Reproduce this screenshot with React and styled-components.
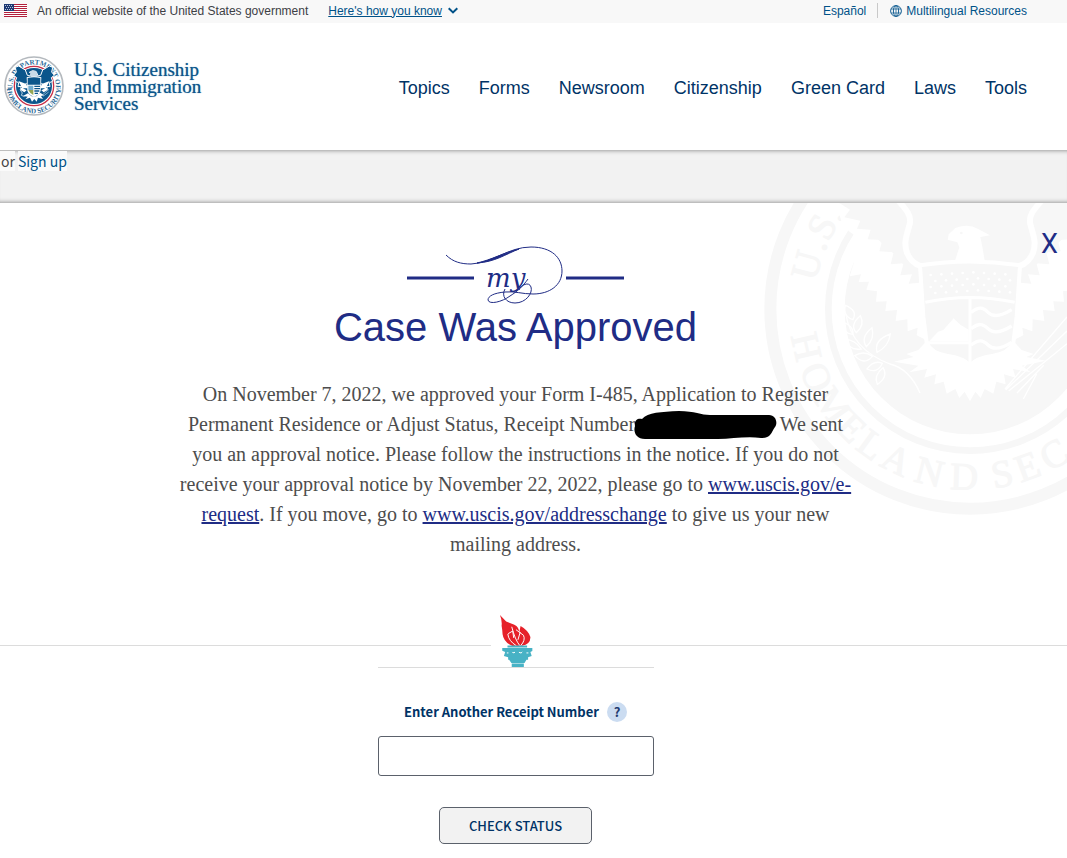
import styled, { createGlobalStyle } from "styled-components";

const navItems = [
  "Topics",
  "Forms",
  "Newsroom",
  "Citizenship",
  "Green Card",
  "Laws",
  "Tools",
];

// letters of the large seal, with their place on the ring in degrees
const topLetters = [
  ["U", -75],
  [".", -67],
  ["S", -61],
  [".", -55],
];

const bottomLetters = [
  ["H", 77],
  ["O", 66],
  ["M", 55],
  ["E", 45],
  ["L", 36],
  ["A", 26],
  ["N", 14],
  ["D", 2],
  ["S", -11],
  ["E", -20],
  ["C", -30],
];

const FlagIcon = () => (
  <svg width="23" height="13" viewBox="0 0 23 13" aria-hidden="true">
    <rect width="23" height="13" fill="#fff" />
    {[0, 2, 4, 6, 8, 10, 12].map((y) => (
      <rect key={y} y={y} width="23" height="1" fill="#b3203c" />
    ))}
    <rect width="10" height="7" fill="#1e3a73" />
    {[1, 3, 5].map((y) =>
      [1, 3, 5, 7].map((x) => (
        <rect key={`${x}-${y}`} x={x + (y === 3 ? 1 : 0)} y={y} width="1" height="1" fill="#b9c4da" />
      ))
    )}
  </svg>
);

const ChevronIcon = () => (
  <svg width="10" height="7" viewBox="0 0 10 7" aria-hidden="true">
    <path d="M.7 1.2 5 5.4 9.3 1.2" fill="none" stroke="#005288" strokeWidth="2" />
  </svg>
);

const GlobeIcon = () => (
  <svg width="12" height="12" viewBox="0 0 12 12" fill="none" stroke="#1a6396" aria-hidden="true">
    <circle cx="6" cy="6" r="5.4" />
    <ellipse cx="6" cy="6" rx="2.6" ry="5.4" />
    <path d="M1 4h10M1 8h10M6 .6v10.8" strokeWidth=".8" />
  </svg>
);

const DepartmentSeal = () => (
  <svg width="60" height="60" viewBox="0 0 180 180" aria-hidden="true">
    <defs>
      <path id="seal-top" d="M90 155A65 65 0 1 1 91 155" />
      <path id="seal-bottom" d="M8 90A82 82 0 0 0 172 90" />
    </defs>
    <circle cx="90" cy="90" r="87" fill="#fff" stroke="#b4b9be" strokeWidth="5" />
    <circle cx="90" cy="90" r="59" fill="#fff" stroke="#c8334a" strokeWidth="4" />
    <circle cx="90" cy="90" r="54" fill="#0b568c" />
    <g fill="#2b6a98" fontFamily="'Liberation Serif', serif" fontSize="21" fontWeight="700">
      <text>
        <textPath href="#seal-top" startOffset="50%" textAnchor="middle">
          U.S. DEPARTMENT OF
        </textPath>
      </text>
      <text>
        <textPath href="#seal-bottom" startOffset="50%" textAnchor="middle">
          HOMELAND SECURITY
        </textPath>
      </text>
    </g>
    <path
      d="M34 34 44 30 64 42 70 58 78 60 82 52 76 49 86 44 97 47 102 60 110 58 116 42 136 30 146 34 143 48 151 58 142 65 146 76 136 80 138 92 126 91 112 82 68 82 54 91 42 92 44 80 34 76 38 65 29 58 37 48Z"
      fill="#0b568c"
      stroke="#fff"
      strokeWidth="3"
    />
    <path d="m43 75 24 9 4 13-16 0ZM137 75l-24 9-4 13 16 0ZM49 93l19 10-7 6-12-7ZM131 93l-19 10 7 6 12-7Z" fill="#fff" />
    <path d="M80 62l1-8-6-5 8-5h12l4 8 2 10Z" fill="#c9dbe8" />
    <path d="M68 64q22-7 44 0l-2 40q-4 13-20 18-16-5-20-18Z" fill="#fff" />
    <path d="M71 66q19-5 38 0v20H71Z" fill="#0b568c" />
    <path d="M73 89h15v13H73Z" fill="#70acd0" />
    <path d="M73 102h15v15q-10-4-15-15Z" fill="#94a653" />
    <path d="M91 91h17M91 98h17M91 105h15M92 112h10" stroke="#0b568c" strokeWidth="4" />
    <path d="m72 112-15 8 14 2-7 8 14-5 6 12 7-8 7 8 4-12 15 4-6-9 10-2-13-8-11 11H83Z" fill="#fff" />
    <path d="m48 101 7 10-3 7 10 4" fill="none" stroke="#b6d0e0" strokeWidth="3" />
    <path d="m115 117 20-17m-18 21 17-13" stroke="#b6d0e0" strokeWidth="2" />
  </svg>
);

const wingInner =
  "M238 24H414C438 44 455 62 451 88C444 117 432 140 441 169C449 194 463 207 480 216V263L446 266 456 238 421 241 431 205 392 208 401 172 358 169 367 135 323 133 332 104 291 101 301 77 253 67 270 44Z";
const wingFeathers =
  "M236 48 258 64 294 96 331 111 360 139 399 174 429 207 467 245 488 275 500 436 470 421 473 398 443 409 442 373 407 378 411 345 376 348 380 319 348 320 351 289 319 284 327 260 296 261 303 238 269 244 281 205 261 172 286 115 246 87Z";

const SealWing = () => (
  <>
    <path d={wingFeathers} fill="#fff" />
    <path d={wingInner} />
    <path
      d="M415 17C440 45 455 62 449 88C440 121 430 143 441 173C449 194 463 207 482 213"
      fill="none"
      stroke="#fff"
      strokeWidth="18"
    />
  </>
);

const WatermarkSeal = () => (
  <Watermark viewBox="12 24 909 936" aria-hidden="true">
    <g fill="#f7f7f7">
      <circle cx="630" cy="342" r="599" fill="none" stroke="#f7f7f7" strokeWidth="36" />
      <circle cx="630" cy="342" r="425" fill="none" stroke="#f7f7f7" strokeWidth="20" />
      <circle cx="630" cy="342" r="376" />
      <path d="M195 24H350L290 125Q220 80 195 24Z" fill="#fff" />
      <g
        stroke="#f7f7f7"
        strokeWidth="3"
        fontFamily="'Liberation Serif', serif"
        fontSize="116"
        textAnchor="middle"
      >
        {topLetters.map(([letter, angle]) => (
          <text key={angle} x="630" y="-127" transform={`rotate(${angle} 630 342)`}>
            {letter}
          </text>
        ))}
        {bottomLetters.map(([letter, angle]) => (
          <text key={angle} x="630" y="884" transform={`rotate(${angle} 630 342)`}>
            {letter}
          </text>
        ))}
      </g>
      <SealWing />
      <g transform="matrix(-1 0 0 1 1260 0)">
        <SealWing />
      </g>
      <path
        d="M500 438 475 465 439 477 461 486 402 500 475 512 448 532 501 522 493 548 528 538 523 568 551 560 560 596 586 582 598 609 614 590 630 619 646 590 662 609 674 582 700 596 709 560 737 568 732 538 767 548 759 522 812 532 785 512 858 497 799 486 821 477 785 465 760 438Z"
        fill="#fff"
      />
      <path
        d="M480 211Q630 188 780 211L770 365 760 443Q748 474 700 482 650 489 630 511 610 489 560 482 512 474 500 443L490 365Z"
        stroke="#fff"
        strokeWidth="12"
      />
      <path d="M496 322Q630 293 764 322M630 309V506M500 443H630" fill="none" stroke="#fff" strokeWidth="9" />
      <path d="m508 438 26-28 16-5 31-35 20 19 25 15v35Z" fill="#fff" />
      <path
        d="M633 352c24-17 35-16 51 0s42 10 71-8M633 401c24-17 35-16 51 0s42 10 71-8M633 450c24-17 35-16 51 0s42 10 71-8"
        fill="none"
        stroke="#fff"
        strokeWidth="10"
      />
      <path
        d="M585 197 598 157 592 142 563 134 566 118 586 99Q625 85 653 101L690 121 661 126 667 155 674 197Z"
        fill="#fff"
      />
      <circle cx="604" cy="114" r="4" />
      {[0, 1, 2, 3].map((row) =>
        [0, 1, 2, 3, 4, 5, 6, 7].map((col) => (
          <circle
            key={`${row}-${col}`}
            cx={512 + col * 32 + (row % 2) * 14}
            cy={232 + row * 18 + Math.abs(col - 4) * 2}
            r="4"
            fill="#fff"
          />
        ))
      )}
      <g fill="none" stroke="#fff" strokeWidth="4">
        <path d="M258 360Q276 464 390 507Q448 521 480 594" />
        <path d="M256 331q38 15 23 43-31-10-23-43ZM301 362q15 28-12 51-21-23 12-51ZM246 382q34 7 33 36-34-3-33-36ZM336 398q9 35-17 57-19-28 17-57ZM391 417q-5 38-40 55-10-37 40-55ZM256 434q29 0 48 28-38 5-48-28ZM284 482q27-17 53 2-24 29-53-2ZM321 522q21-28 46-17-14 32-46 17ZM352 568q-12-27 17-50 17 28-17 50Z" />
        <path d="M735 582 921 366M737 585l184-177M746 588 921 446M790 612l40-75M771 594l80-83" />
      </g>
    </g>
  </Watermark>
);

const MyFlourish = () => (
  <svg width="218" height="59" viewBox="0 0 218 59" fill="none" stroke="#202c85" role="img" aria-label="my">
    <path d="M0 33H67M159 33H217" strokeWidth="3" />
    <path d="M39 10C46 17 54 19 64 19C86 18 101 2 124 2C145 2 155 13 155 26C155 40 143 49 126 49C115 49 108 46 98 47C87 48 81 51 81 55C82 60 95 57 103 51C111 46 116 41 121 34" />
    <path d="M70 18C84 15 96 8 112 4C99 9 88 17 70 18Z" fill="#202c85" />
    <path d="M98 44C94 51 99 58 108 58C119 58 126 48 124 42C122 36 114 40 112 45" />
    <text x="79" y="42" fill="#202c85" stroke="none" fontFamily="'DejaVu Serif', serif" fontStyle="italic" fontSize="26">
      my
    </text>
  </svg>
);

const TorchIcon = () => (
  <svg width="35" height="52" viewBox="0 0 105 159" aria-hidden="true">
    <path d="M5 0 24 20 49 30Q66 38 63 58L68 34Q90 46 98 67 99 89 72 94L43 95Q16 83 13 59 12 43 10 33 12 17 5 0Z" fill="#e62129" />
    <path d="M29 58Q31 79 55 94M41 36Q51 76 66 94M54 45 77 62Q84 77 68 94M30 57 44 49 47 70M67 52 60 76" fill="none" stroke="#fff" strokeWidth="3" />
    <path d="M28 93H88V99H28ZM12 101H104V110L98 113 102 125 91 129V137H30V129L17 125 21 113 12 109ZM33 137H86L80 147H40ZM41 148H78V159H41Z" fill="#47b2c5" />
    <path d="M26 116h5M43 113q0 5 8 1M63 114q8 5 10-1M86 116h6" stroke="#fff" strokeWidth="3" fill="none" />
  </svg>
);

const RedactedNumber = () => (
  <Redaction viewBox="0 0 144 28" aria-hidden="true">
    <path d="M8 8C14 1 27 1 45 0C61 0 67 4 76 4H135C142 4 144 12 141 16C137 22 137 27 127 27C112 25 98 28 84 28H11C2 28-1 21 1 15C0 10 3 7 8 8Z" />
  </Redaction>
);

const App = () => {
  return (
    <Page>
      <GlobalStyle />
      <Banner>
        <BannerGroup>
          <FlagIcon />
          <BannerText>An official website of the United States government</BannerText>
          <KnowButton type="button">
            <span>Here's how you know</span>
            <ChevronIcon />
          </KnowButton>
        </BannerGroup>
        <BannerGroup>
          <BannerLink href="#es">Español</BannerLink>
          <BannerRule />
          <BannerLink href="#languages">
            <GlobeIcon />
            Multilingual Resources
          </BannerLink>
        </BannerGroup>
      </Banner>

      <Header>
        <Brand href="#home">
          <DepartmentSeal />
          <BrandName>
            U.S. Citizenship
            <br />
            and Immigration
            <br />
            Services
          </BrandName>
        </Brand>
        <Nav>
          {navItems.map((item) => (
            <NavLink key={item} href="#menu">
              {item}
            </NavLink>
          ))}
        </Nav>
      </Header>

      <AccountBar>
        <AccountText>or</AccountText>
        <AccountLink href="#signup">Sign up</AccountLink>
      </AccountBar>

      <CaseSection>
        <WatermarkSeal />
        <CloseButton type="button" aria-label="Close">
          X
        </CloseButton>
        <CaseContent>
          <MyFlourish />
          <CaseTitle>Case Was Approved</CaseTitle>
          <CaseMessage>
            On November 7, 2022, we approved your Form I-485, Application to Register Permanent
            Residence or Adjust Status, Receipt Number
            <RedactedNumber /> We sent you an approval notice. Please follow the instructions in
            the notice. If you do not receive your approval notice by November 22, 2022, please go
            to{" "}
            <a href="#e-request">
              www.uscis.gov/e-
              <wbr />
              request
            </a>
            . If you move, go to <a href="#address">www.uscis.gov/addresschange</a> to give us your
            new mailing address.
          </CaseMessage>
        </CaseContent>
      </CaseSection>

      <TorchDivider>
        <DividerLine />
        <TorchIcon />
        <DividerLine $end />
      </TorchDivider>

      <FormArea>
        <ReceiptForm onSubmit={(e) => e.preventDefault()}>
          <LabelRow>
            <ReceiptLabel htmlFor="receipt">Enter Another Receipt Number</ReceiptLabel>
            <HelpButton type="button" aria-label="Help">
              ?
            </HelpButton>
          </LabelRow>
          <ReceiptInput id="receipt" type="text" />
          <CheckButton type="submit">CHECK STATUS</CheckButton>
        </ReceiptForm>
      </FormArea>
    </Page>
  );
};

const GlobalStyle = createGlobalStyle`
  *, *::before, *::after {
    box-sizing: border-box;
  }

  body {
    margin: 0;
    background-color: #ffffff;
    font-family: "Liberation Sans", Arial, sans-serif;
  }

  svg {
    flex-shrink: 0;
  }
`;

const Page = styled.div`
  overflow-x: hidden;
`;

const Banner = styled.div`
  display: flex;
  justify-content: space-between;
  align-items: center;
  height: 23px;
  padding: 0 40px 2px 4px;
  background-color: #f8f8f8;
  font-size: 12px;
`;

const BannerGroup = styled.div`
  display: flex;
  align-items: center;
  white-space: nowrap;
`;

const BannerText = styled.span`
  margin: 0 20px 0 10px;
  color: #3d4045;
`;

const KnowButton = styled.button`
  display: flex;
  align-items: center;
  gap: 6px;
  padding: 0;
  border: none;
  background: none;
  color: #005288;
  font: inherit;
  cursor: pointer;

  span {
    text-decoration: underline;
  }
`;

const BannerLink = styled.a`
  display: flex;
  align-items: center;
  gap: 4px;
  color: #005288;
  text-decoration: none;
`;

const BannerRule = styled.span`
  width: 1px;
  height: 15px;
  margin: 0 12px 0 11px;
  background-color: #c9c9c9;
`;

const Header = styled.header`
  display: flex;
  justify-content: space-between;
  align-items: center;
  height: 127px;
  padding: 0 40px 2px 4px;
  background-color: #ffffff;
`;

const Brand = styled.a`
  display: flex;
  align-items: center;
  gap: 10px;
  color: #0b568c;
  text-decoration: none;
`;

const BrandName = styled.span`
  padding-top: 2px;
  font-family: "Liberation Serif", serif;
  font-size: 19px;
  line-height: 17px;
  text-shadow: 0 0 1px rgba(11, 86, 140, 0.7);
`;

const Nav = styled.nav`
  display: flex;
  gap: 29px;
  padding-top: 4px;
`;

const NavLink = styled.a`
  color: #003366;
  font-size: 18px;
  line-height: 24px;
  text-decoration: none;
`;

const AccountBar = styled.div`
  display: flex;
  align-items: flex-start;
  gap: 3px;
  height: 53px;
  padding-top: 1px;
  background-color: #f2f2f2;
  box-shadow:
    inset 0 5px 5px -5px rgba(0, 0, 0, 0.5),
    inset 0 -5px 5px -5px rgba(0, 0, 0, 0.5);
  font-family: "Noto Sans CJK JP", "Open Sans", sans-serif;
  font-size: 14px;
  line-height: 20px;
`;

const AccountText = styled.span`
  padding-left: 1px;
  background-color: #fafafa;
  color: #444444;
`;

const AccountLink = styled.a`
  background-color: #fafafa;
  color: #005288;
  text-decoration: none;
`;

const CaseSection = styled.section`
  position: relative;
  padding: 42px 36px 56px 0;
  background-color: #ffffff;
`;

const Watermark = styled.svg`
  position: absolute;
  top: 0;
  right: 0;
  width: 303px;
  height: 312px;
`;

const CloseButton = styled.button`
  position: absolute;
  z-index: 1;
  top: 24px;
  right: 9px;
  padding: 0;
  border: none;
  background: none;
  color: #202c85;
  font-family: Roboto, sans-serif;
  font-size: 27px;
  line-height: 34px;
  cursor: pointer;
`;

const CaseContent = styled.div`
  position: relative;
  display: flex;
  flex-direction: column;
  align-items: center;
`;

const CaseTitle = styled.h1`
  margin: 0 0 29px;
  color: #202c85;
  font-size: 40px;
  font-weight: 400;
  line-height: 46px;
`;

const CaseMessage = styled.p`
  max-width: 684px;
  margin: 0;
  color: #4d4d4d;
  font-family: "Liberation Serif", serif;
  font-size: 20px;
  line-height: 30px;
  text-align: center;

  a {
    color: #202c85;
  }
`;

const Redaction = styled.svg`
  width: 144px;
  height: 28px;
  margin: -4px -3px -2px -1px;
  vertical-align: middle;
`;

const TorchDivider = styled.div`
  display: grid;
  grid-template-columns: 1fr auto 1fr;
  align-items: center;
  gap: 7px;
  padding-right: 36px;
`;

const DividerLine = styled.span`
  height: 1px;
  margin-top: 8px;
  margin-right: ${(props) => (props.$end ? "-36px" : "0")};
  background-color: #dcdcdc;
`;

const FormArea = styled.div`
  display: flex;
  justify-content: center;
  padding: 0 36px 14px 0;
`;

const ReceiptForm = styled.form`
  display: flex;
  flex-direction: column;
  align-items: center;
  width: 276px;
  border-top: 1px solid #dcdcdc;
  font-family: "Noto Sans CJK JP", "Open Sans", sans-serif;
`;

const LabelRow = styled.div`
  display: flex;
  align-items: center;
  gap: 8px;
  margin: 34px 0 14px;
`;

const ReceiptLabel = styled.label`
  color: #003366;
  font-size: 13px;
  font-weight: 700;
  line-height: 20px;
`;

const HelpButton = styled.button`
  width: 20px;
  height: 20px;
  padding: 0;
  border: none;
  border-radius: 50%;
  background-color: #cbdcf1;
  color: #1f3b70;
  font-family: inherit;
  font-size: 13px;
  font-weight: 700;
  line-height: 20px;
  cursor: pointer;
`;

const ReceiptInput = styled.input`
  width: 100%;
  height: 40px;
  padding: 0 10px;
  border: 1px solid #5b616b;
  border-radius: 3px;
  background-color: #ffffff;
  font: inherit;
`;

const CheckButton = styled.button`
  height: 37px;
  margin-top: 31px;
  padding: 0 29px;
  border: 1px solid #5b616b;
  border-radius: 5px;
  background-color: #f2f2f2;
  color: #003366;
  font-family: inherit;
  font-size: 13px;
  font-weight: 500;
  line-height: 20px;
  cursor: pointer;
`;

export default App;
